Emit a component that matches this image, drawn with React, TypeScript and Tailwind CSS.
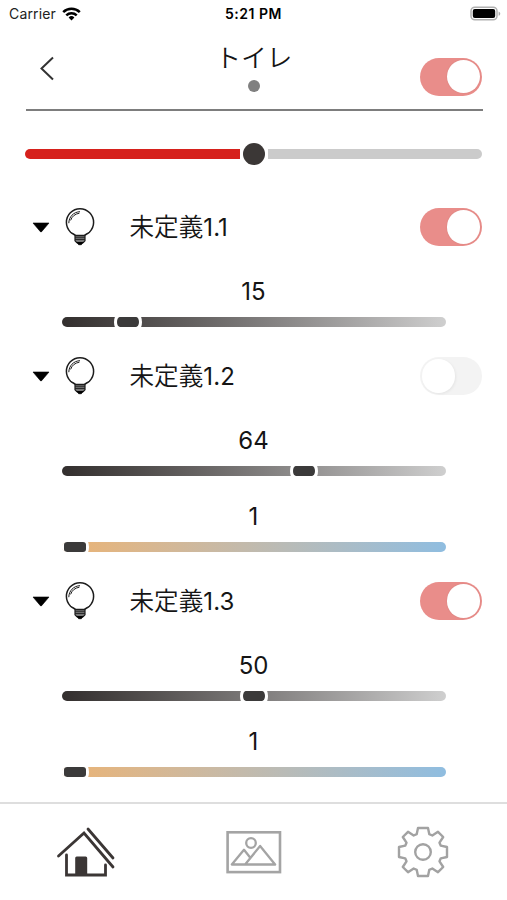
import { useState } from "react";
import clsx from "clsx";

type Channel = { kind: "brightness" | "temperature"; value: number };
type Light = { name: string; label: string; on: boolean; channels: Channel[] };

const LIGHTS: Light[] = [
  { name: "未定義", label: "1.1", on: true, channels: [{ kind: "brightness", value: 15 }] },
  {
    name: "未定義",
    label: "1.2",
    on: false,
    channels: [
      { kind: "brightness", value: 64 },
      { kind: "temperature", value: 1 },
    ],
  },
  {
    name: "未定義",
    label: "1.3",
    on: true,
    channels: [
      { kind: "brightness", value: 50 },
      { kind: "temperature", value: 1 },
    ],
  },
];

function StatusBar() {
  return (
    <div className="grid h-7 grid-cols-3 items-center pl-[9px] pr-[6px] text-[14px] leading-none">
      <div className="flex items-center gap-[6px] text-[#222]">
        <span className="tracking-[0.15px]">Carrier</span>
        <svg width="19" height="14" viewBox="0 0 19 14" fill="none" stroke="#000" strokeWidth="2.5">
          <path d="M1.2 5.1a11.8 11.8 0 0 1 16.6 0" />
          <path d="M4.3 8.3a7.4 7.4 0 0 1 10.4 0" />
          <path d="M9.5 13.4 6.6 10.5a4.1 4.1 0 0 1 5.8 0Z" fill="#000" stroke="none" />
        </svg>
      </div>
      <div className="-ml-[11px] -mr-2 text-center text-[14px] font-semibold tracking-[0.5px] text-black">5:21 PM</div>
      <svg className="justify-self-end" width="31" height="16" viewBox="0 0 31 16">
        <rect x="1" y="1.2" width="26" height="12.6" rx="3.8" fill="#fff" stroke="#b0b0b0" strokeWidth="1.5" />
        <rect x="2.8" y="3" width="22.4" height="9" rx="2" fill="#000" />
        <path d="M28.6 5.4c2.2.8 2.2 3.6 0 4.4Z" fill="#aaa" />
      </svg>
    </div>
  );
}

function Toggle({ defaultOn }: { defaultOn: boolean }) {
  const [on, setOn] = useState(defaultOn);

  return (
    <button
      role="switch"
      aria-checked={on}
      onClick={() => setOn(!on)}
      className={clsx(
        "flex h-[38px] w-[62.5px] shrink-0 items-center rounded-full px-[2px]",
        on ? "justify-end bg-[#e98d8a]" : "justify-start bg-[#f3f3f3]"
      )}
    >
      <span
        className={clsx(
          "size-[33.5px] rounded-full bg-white",
          on ? "shadow-[0_0_2px_rgba(0,0,0,0.08)]" : "shadow-[1px_1px_3px_rgba(0,0,0,0.06)]"
        )}
      />
    </button>
  );
}

function Bulb() {
  return (
    <svg className="ml-[14.5px] shrink-0" width="32" height="40" viewBox="0 0 32 40" fill="none" stroke="#1c1c1c">
      <path d="M11.3 28.4C10.8 27.4 8.4 26.8 6.6 25.2A13.6 13.6 0 1 1 25.4 25.2C23.6 26.8 21.2 27.4 20.7 28.4" strokeWidth="1.5" />
      <path d="M4.8 16.2C4.9 9.8 9.6 4.9 16 4.7M6.6 13.4C7.8 9.4 11.2 6.8 15.4 6.2" strokeWidth="1" />
      <path d="M11 28.4h10v5.4l-1.8 1.9h-6.4L11 33.8Z" fill="#777" strokeWidth="1.2" />
      <path d="M11 30.2h10M11 32.4h10" stroke="#222" strokeWidth="1" />
      <path d="M12.9 35.6h6.2L17.3 37.7h-2.6Z" fill="#000" stroke="#000" strokeWidth="0.8" />
    </svg>
  );
}

function ChannelSlider({ kind, value }: Channel) {
  // colour temperature runs 1-100, brightness 0-100
  const ratio = kind === "temperature" ? (value - 1) / 99 : value / 100;

  return (
    <div className="h-[76px] px-[36.5px] pt-[19px]">
      <div className="h-[42px] text-center text-[24px] leading-[33px]">{value}</div>
      <div
        className={clsx(
          "relative h-[10px] overflow-hidden rounded-full bg-linear-to-r",
          kind === "temperature" ? "from-[#ebb373] to-[#8fbde0]" : "from-[#332f2e] to-[#cfcfcf]"
        )}
      >
        <div
          className="absolute top-1/2 flex size-[28px] -translate-x-1/2 -translate-y-1/2 items-center justify-center rounded-full bg-white"
          style={{ left: `calc(13px + (100% - 26px) * ${ratio})` }}
        >
          <div className="h-[10px] w-[22px] rounded-[3px/5px] bg-[#3b3a3a]" />
        </div>
        {ratio === 0 && (
          <>
            <div className="absolute inset-y-0 left-0 w-[26px] bg-white" />
            <div className="absolute inset-y-0 left-[2px] w-[22px] rounded-[3px] bg-[#3b3a3a]" />
          </>
        )}
      </div>
    </div>
  );
}

function LightRow({ light }: { light: Light }) {
  return (
    <section className="pb-4">
      <div className="flex h-[57px] items-center">
        <svg className="ml-[6.5px] shrink-0" width="18" height="11" viewBox="0 0 18 11">
          <path d="M1 1h16L9.6 9.7a.8.8 0 0 1-1.2 0Z" fill="#000" stroke="#000" strokeWidth="0.6" strokeLinejoin="round" />
        </svg>
        <Bulb />
        <div className="ml-[33.5px] flex-1 text-[24.6px] leading-[36px]">
          <span className="font-[350]">{light.name}</span>
          <span className="text-[24px] tracking-[0.1px]">{light.label}</span>
        </div>
        <Toggle defaultOn={light.on} />
      </div>
      {light.channels.map((c) => (
        <ChannelSlider key={c.kind} {...c} />
      ))}
    </section>
  );
}

function TabBar() {
  return (
    <nav className="grid h-[98px] shrink-0 grid-cols-3 border-t-2 border-[#dedede] bg-white pt-[19px]">
      <button className="flex justify-center">
        <svg width="60" height="60" viewBox="0 0 60 60" fill="none" stroke="#3b3635" strokeWidth="2.8">
          <path d="M3.5 33 29 10 58 44" strokeLinecap="round" />
          <path d="M33 6 58 35" strokeLinecap="round" />
          <path d="M11.5 32v20h39V42" strokeLinecap="round" />
          <path d="M20.2 35a1.5 1.5 0 0 1 1.5-1.5h9a1.5 1.5 0 0 1 1.5 1.5v17h-12Z" fill="#3b3635" stroke="none" />
        </svg>
      </button>
      <button className="flex justify-center">
        <svg width="60" height="60" viewBox="0 0 60 60" fill="none" stroke="#a4a4a4" strokeWidth="2.6">
          <rect x="3.6" y="9.3" width="52.4" height="39.8" />
          <path d="m21.1 41.5 15-18.5 15 18.5H7.8L20 26.8l6.3 8" strokeWidth="2.3" strokeLinejoin="round" />
          <circle cx="27" cy="20" r="4.8" strokeWidth="2.3" />
        </svg>
      </button>
      <button className="flex justify-center">
        <svg width="60" height="60" viewBox="0 0 60 60" fill="none" stroke="#a2a2a2" strokeWidth="2.4" strokeLinejoin="round">
          <path d="M25 5H35L36.3 11.2 39.3 12.5 45 8.8 50.2 14 46.5 19.7 47.8 22.7 54 24V34L47.8 35.3 46.5 38.3 50.2 44 45 49.2 39.3 45.5 36.3 46.8 35 53H25L23.7 46.8 20.7 45.5 15 49.2 9.8 44 13.5 38.3 12.2 35.3 6 34V24L12.2 22.7 13.5 19.7 9.8 14 15 8.8 20.7 12.5 23.7 11.2Z" />
          <circle cx="30" cy="29" r="7.8" />
        </svg>
      </button>
    </nav>
  );
}

export default function App() {
  return (
    <div className="flex h-screen flex-col overflow-hidden bg-white font-['Inter','Noto_Sans_CJK_JP',sans-serif] text-[#151515]">
      <StatusBar />

      <header className="ml-[25.5px] mr-[24.5px] grid h-[83px] shrink-0 grid-cols-3 border-b-2 border-[#7d7d7d]">
        <button className="ml-[13px] mt-[27px] h-[27px] w-4">
          <svg width="16" height="27" viewBox="0 0 16 27" fill="none" stroke="#333" strokeWidth="2">
            <path d="M14 2.5 2.5 13.5 14 24.5" />
          </svg>
        </button>
        <div className="flex flex-col items-center pt-[12px]">
          <h1 className="text-[25.5px] font-[350] leading-[36px] tracking-[0.2px]">トイレ</h1>
          <span className="mt-[4px] size-[12px] rounded-full bg-[#808080]" />
        </div>
        <div className="mt-[29.5px] flex justify-end">
          <Toggle defaultOn />
        </div>
      </header>

      <main className="flex-1 px-[25px]">
        <div className="flex h-[87.5px] items-start pt-[28.5px]">
          <div className="flex h-[28px] w-full items-center">
            <div className="h-[10px] flex-1 rounded-l-full bg-[#d6211c]" />
            <div className="mx-[3px] size-[22px] rounded-full bg-[#3b3736]" />
            <div className="h-[10px] flex-1 rounded-r-full bg-[#cbcbcb]" />
          </div>
        </div>
        {LIGHTS.map((light) => (
          <LightRow key={light.label} light={light} />
        ))}
      </main>

      <TabBar />
    </div>
  );
}
